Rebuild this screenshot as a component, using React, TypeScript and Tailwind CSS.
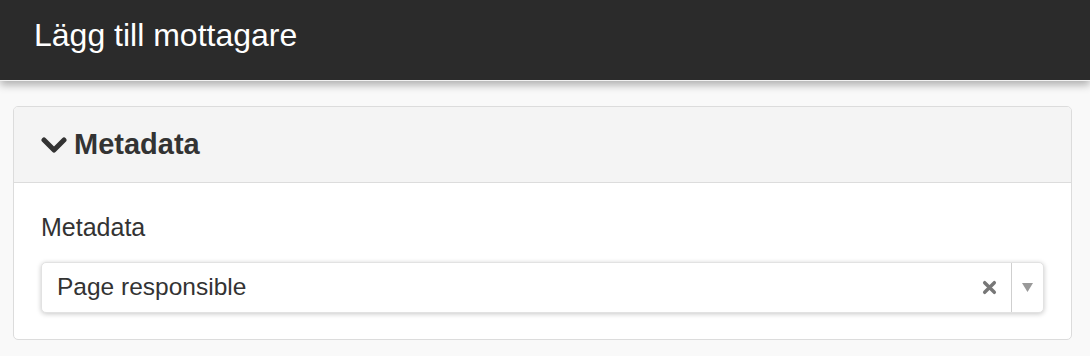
export default function App() {
  return (
    <div className="h-[356px] w-full overflow-hidden bg-[#f9f9f9] font-['Liberation_Sans',Arial,sans-serif]">
      <header className="relative z-10 flex h-[81px] items-center border-b border-[#f2f2f2] bg-[#2b2b2b] pb-[10px] pl-[34px] shadow-[0_4px_8px_rgba(0,0,0,0.3)]">
        <h1 className="text-[32px] leading-none text-white">Lägg till mottagare</h1>
      </header>

      <section className="ml-[13px] mr-[18px] mt-[25px] overflow-hidden rounded-[5px] border border-[#dcdcdc] bg-white">
        <div className="flex h-[76px] items-center gap-[7px] border-b border-[#dcdcdc] bg-[#f4f4f4] pl-[27px]">
          <svg width="26" height="18" viewBox="0 0 26 18" className="mt-[1px]">
            <path d="M3 4 L13 14 L23 4" fill="none" stroke="#333" strokeWidth="5" strokeLinecap="round" strokeLinejoin="round" />
          </svg>
          <h2 className="text-[29px] font-bold leading-none text-[#333]">Metadata</h2>
        </div>

        <div className="px-[27px] pb-[26px] pt-[30px]">
          <label className="block text-[25px] leading-[29px] text-[#333]">Metadata</label>
          <div className="mt-[20px] flex h-[51px] items-center rounded-[5px] border border-[#e2e2e2] bg-white shadow-[0_1px_5px_rgba(0,0,0,0.22)]">
            <span className="flex-1 pl-[15px] text-[24.5px] leading-none text-[#333]">Page responsible</span>
            <span className="mr-[14px] flex h-full items-center">
              <svg width="15" height="15" viewBox="0 0 14 14">
                <path d="M2.5 2.5 L11.5 11.5 M11.5 2.5 L2.5 11.5" stroke="#777" strokeWidth="3.2" strokeLinecap="round" />
              </svg>
            </span>
            <span className="h-full w-px bg-[#cfcfcf]" />
            <span className="flex h-full w-[31px] items-center justify-center">
              <svg width="11" height="9" viewBox="0 0 10 8">
                <path d="M0 0 L10 0 L5 8 Z" fill="#999" />
              </svg>
            </span>
          </div>
        </div>
      </section>
    </div>
  )
}
